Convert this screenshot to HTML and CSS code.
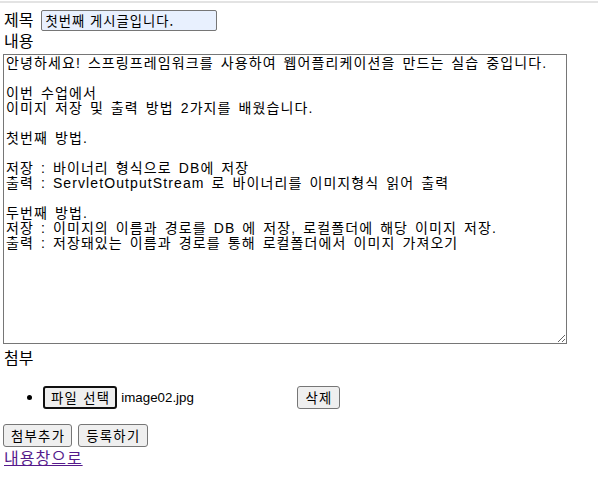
FILE: index.html
```html
<!DOCTYPE html>
<html lang="ko">
<head>
    <meta charset="UTF-8">
    <title>글쓰기</title>
    <link rel="stylesheet" href="styles.css">
</head>
<body>
<div class="topline"></div>
<form class="writeForm">
    <div class="titleRow">
        <label for="title">제목</label>
        <input type="text" id="title" class="titleInput" value="첫번째 게시글입니다.">
    </div>
    <div class="label">내용</div>
    <textarea class="content" spellcheck="false">안녕하세요! 스프링프레임워크를 사용하여 웹어플리케이션을 만드는 실습 중입니다.

이번 수업에서
이미지 저장 및 출력 방법 2가지를 배웠습니다.

첫번째 방법.

저장 : 바이너리 형식으로 DB에 저장
출력 : ServletOutputStream 로 바이너리를 이미지형식 읽어 출력

두번째 방법.
저장 : 이미지의 이름과 경로를 DB 에 저장, 로컬폴더에 해당 이미지 저장.
출력 : 저장돼있는 이름과 경로를 통해 로컬폴더에서 이미지 가져오기</textarea>
    <div class="label attachLabel">첨부</div>
    <ul class="fileList">
        <li>
            <span class="fileBox">
                <button type="button" class="fileBtn">파일 선택</button>
                <span class="fileName">image02.jpg</span>
            </span>
            <button type="button" class="btn">삭제</button>
        </li>
    </ul>
    <div class="actions">
        <button type="button" class="btn">첨부추가</button>
        <button type="submit" class="btn">등록하기</button>
    </div>
    <a href="#" class="backLink">내용창으로</a>
</form>
</body>
</html>
```

FILE: styles.css
```css
* {
    box-sizing: border-box;
}

body {
    margin: 0;
    padding: 0 3px;
    font-family: "Liberation Sans", "Noto Sans CJK KR", sans-serif;
    font-size: 16px;
    color: #000;
    background: #fff;
}

.topline {
    height: 2px;
    margin: 1px -3px 0;
    background: #e3e3e3;
}

.titleRow {
    display: flex;
    align-items: center;
    gap: 8px;
    height: 23px;
    margin-top: 6px;
    line-height: 20px;
}

.titleRow label {
    padding-left: 1px;
}

.titleInput {
    width: 176px;
    height: 21px;
    padding: 1px 3px;
    border: 1px solid #767676;
    border-radius: 2px;
    background: #e8f0fe;
    font-family: "Noto Sans CJK KR", sans-serif;
    font-size: 13.33px;
    letter-spacing: 1px;
    color: #000;
}

.label {
    height: 21px;
    line-height: 20px;
    padding-left: 1px;
}

.content {
    display: block;
    width: 564px;
    height: 290px;
    margin: 1px 0 0;
    padding: 1px 2px;
    border: 1px solid #767676;
    font-family: "Liberation Sans", "Noto Sans CJK KR", sans-serif;
    font-size: 14px;
    line-height: 15px;
    letter-spacing: 1.1px;
    word-spacing: 2px;
    color: #000;
    resize: both;
}

.attachLabel {
    margin-top: 5px;
}

.fileList {
    margin: 14px 0 12px;
    padding-left: 40px;
}

.fileList li {
    height: 27px;
    padding-top: 2px;
}

.fileBox {
    display: inline-flex;
    align-items: center;
    width: 246px;
    font-size: 13.33px;
    vertical-align: middle;
}

.fileBtn {
    height: 23px;
    padding: 0 5px 0 6px;
    border: 2px solid #101010;
    border-radius: 3px;
    background: #efefef;
    font-family: "Noto Sans CJK KR", sans-serif;
    font-size: 13.33px;
    letter-spacing: 1.3px;
    line-height: 17px;
    color: #000;
}

.fileName {
    margin-left: 4px;
}

.btn {
    height: 23px;
    padding: 0 6px 0 7px;
    border: 1px solid #767676;
    border-radius: 3px;
    background: #efefef;
    font-family: "Noto Sans CJK KR", sans-serif;
    font-size: 13.33px;
    letter-spacing: 1.3px;
    line-height: 19px;
    color: #000;
    vertical-align: middle;
}

.fileList .btn {
    margin-left: 4px;
}

.actions {
    display: flex;
    gap: 6px;
    height: 25px;
    padding-top: 1px;
}

.backLink {
    display: inline-block;
    margin-left: 1px;
    line-height: 19px;
    letter-spacing: 1px;
    color: #551a8b;
    font-family: "Noto Sans CJK KR", sans-serif;
}
```
